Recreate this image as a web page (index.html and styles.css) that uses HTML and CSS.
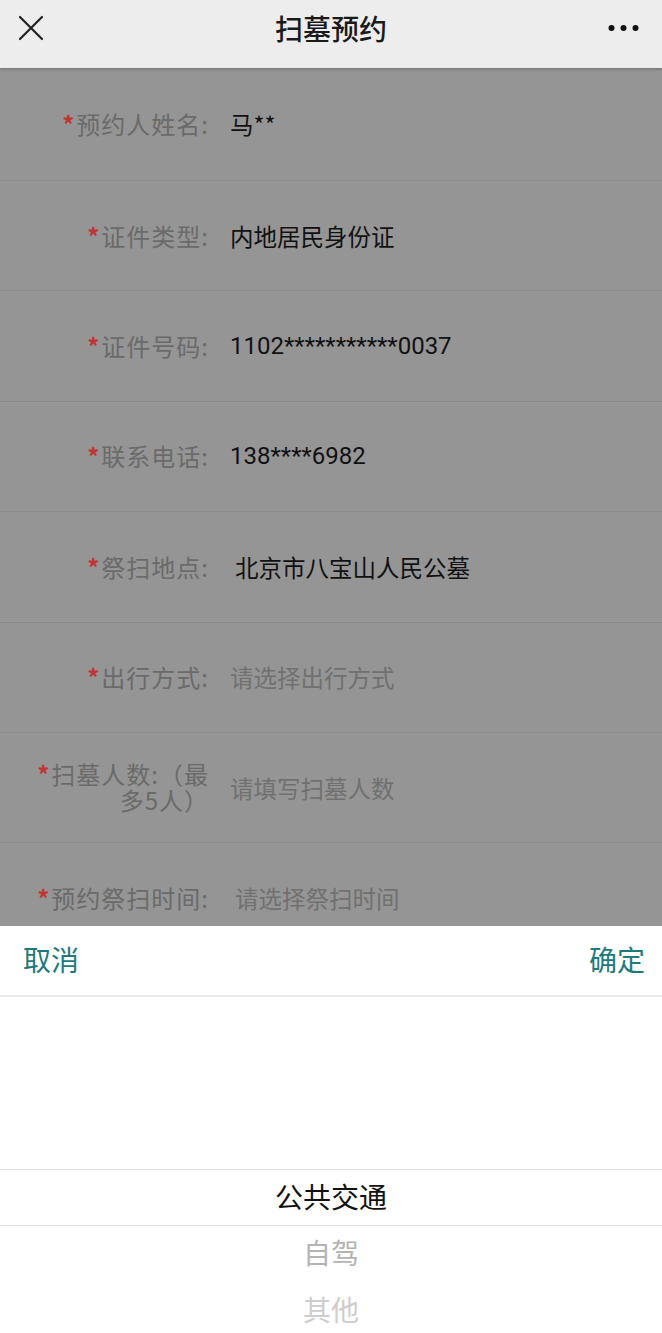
FILE: index.html
```html
<!DOCTYPE html>
<html lang="zh-CN">
<head>
<meta charset="utf-8">
<title>扫墓预约</title>
<link rel="stylesheet" href="styles.css">
</head>
<body>
<div class="page">
  <header class="navbar">
    <svg class="nav-close" width="26" height="26" viewBox="0 0 26 26"><path d="M2 2 L24 24 M24 2 L2 24" stroke="#222" stroke-width="2.2" fill="none" stroke-linecap="round"/></svg>
    <div class="nav-title">扫墓预约</div>
    <svg class="nav-more" width="32" height="8" viewBox="0 0 32 8"><circle cx="3.5" cy="4" r="3"/><circle cx="15.5" cy="4" r="3"/><circle cx="27.5" cy="4" r="3"/></svg>
  </header>
  <main class="form">
    <div class="row row-first"><div class="label"><span class="req">*</span>预约人姓名:</div><div class="value">马**</div></div>
    <div class="row"><div class="label"><span class="req">*</span>证件类型:</div><div class="value">内地居民身份证</div></div>
    <div class="row"><div class="label"><span class="req">*</span>证件号码:</div><div class="value num">1102***********0037</div></div>
    <div class="row"><div class="label"><span class="req">*</span>联系电话:</div><div class="value num">138****6982</div></div>
    <div class="row"><div class="label"><span class="req">*</span>祭扫地点:</div><div class="value shift">北京市八宝山人民公墓</div></div>
    <div class="row"><div class="label"><span class="req">*</span>出行方式:</div><div class="value placeholder">请选择出行方式</div></div>
    <div class="row"><div class="label two"><span class="req">*</span>扫墓人数:（最多5人）</div><div class="value placeholder">请填写扫墓人数</div></div>
    <div class="row"><div class="label"><span class="req">*</span>预约祭扫时间:</div><div class="value placeholder shift">请选择祭扫时间</div></div>
  </main>
  <section class="picker">
    <div class="picker-bar">
      <span class="picker-btn">取消</span>
      <span class="picker-btn">确定</span>
    </div>
    <div class="picker-col">
      <div class="opt selected">公共交通</div>
      <div class="opt fade1">自驾</div>
      <div class="opt fade2">其他</div>
    </div>
  </section>
</div>
</body>
</html>
```
FILE: styles.css
```css
html, body {
  margin: 0;
  padding: 0;
}
body {
  font-family: "Noto Sans CJK SC", "Noto Sans", sans-serif;
  background: #959595;
  width: 662px;
  height: 1333px;
  overflow: hidden;
}
.page {
  position: relative;
  width: 662px;
  height: 1333px;
  overflow: hidden;
  background: #959595;
}
.navbar {
  position: relative;
  z-index: 2;
  height: 68px;
  background: #ededed;
  display: flex;
  align-items: center;
  justify-content: space-between;
  padding: 0 22px 0 18px;
  box-sizing: border-box;
  box-shadow: 0 1px 3px rgba(0,0,0,0.25);
}
.nav-close {
  margin-top: -13px;
}
.nav-title {
  position: absolute;
  left: 0;
  right: 0;
  top: 0;
  text-align: center;
  line-height: 56px;
  font-size: 28px;
  font-weight: 500;
  color: #1a1a1a;
  pointer-events: none;
}
.nav-more {
  fill: #111;
  margin-top: -13px;
}
.form {
  display: flex;
  flex-direction: column;
}
.row {
  height: 109.4px;
  border-bottom: 1px solid #8b8b8b;
  display: flex;
  align-items: center;
}
.row-first {
  height: 112px;
}
.label {
  width: 209px;
  padding-left: 28px;
  box-sizing: border-box;
  text-align: right;
  font-size: 24px;
  line-height: 26px;
  letter-spacing: 1px;
  color: #6a6a6a;
  flex-shrink: 0;
}
.label.two {
  margin-top: -2px;
}
.req {
  color: #c23434;
  font-size: 24px;
  font-weight: 700;
  margin-right: 1px;
}
.value {
  margin-left: 21px;
  font-size: 23.5px;
  color: #111;
}
.value.num {
  font-family: "Roboto", "Noto Sans CJK SC", sans-serif;
  font-size: 24px;
}
.value.shift {
  margin-left: 26px;
}
.placeholder {
  color: #707070;
}
.picker {
  position: absolute;
  left: 0;
  right: 0;
  bottom: 0;
  height: 407px;
  background: #fff;
  display: flex;
  flex-direction: column;
}
.picker-bar {
  height: 69px;
  display: flex;
  justify-content: space-between;
  align-items: center;
  padding: 0 17px 0 23px;
  border-bottom: 2px solid #ececec;
  flex-shrink: 0;
}
.picker-btn {
  font-size: 28px;
  color: #1f7a7d;
  margin-top: -4px;
}
.picker-col {
  padding-top: 172px;
  display: flex;
  flex-direction: column;
}
.opt {
  height: 57px;
  line-height: 52px;
  text-align: center;
  font-size: 28px;
  color: #111;
  box-sizing: border-box;
}
.opt.selected {
  height: 57px;
  line-height: 52px;
  border-top: 1px solid #e2e2e2;
  border-bottom: 1px solid #e2e2e2;
}
.opt.fade1 {
  color: #b4b4b4;
}
.opt.fade2 {
  color: #cdcdcd;
}
```
